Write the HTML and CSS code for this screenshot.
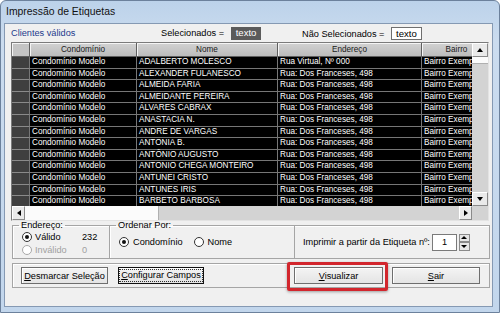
FILE: index.html
```html
<!DOCTYPE html>
<html lang="pt-BR">
<head>
  <meta charset="UTF-8">
  <title>Impressão de Etiquetas</title>
  <link rel="stylesheet" href="styles.css">
</head>
<body>
  <div class="window">
    <div class="titlebar">Impressão de Etiquetas</div>

    <div class="client">
      <!-- Counters -->
      <div class="topbar">
        <span class="caption">Clientes válidos</span>
        <span class="counter counter-sel">Selecionados = <span class="tag tag-dark">texto</span></span>
        <span class="counter">Não Selecionados = <span class="tag tag-light">texto</span></span>
      </div>

      <!-- Grid -->
      <div class="grid">
        <div class="grid-main">
          <div class="grid-view" id="grid-view">
            <div class="hcell hcell-ind"></div>
            <div class="hcell">Condomínio</div>
            <div class="hcell">Nome</div>
            <div class="hcell">Endereço</div>
            <div class="hcell">Bairro</div>
          </div>
          <div class="vscroll">
            <div class="sbtn"><span class="arrow up"></span></div>
            <div class="vthumb"></div>
            <div class="vtrack"></div>
            <div class="sbtn"><span class="arrow down"></span></div>
          </div>
        </div>
        <div class="hscroll-row">
          <div class="hscroll">
            <div class="sbtn sbtn-h"><span class="arrow left"></span></div>
            <div class="hthumb"></div>
            <div class="htrack"></div>
            <div class="sbtn sbtn-h"><span class="arrow right"></span></div>
          </div>
          <div class="corner"></div>
        </div>
      </div>

      <!-- Options -->
      <div class="options">
        <fieldset class="group group-addr">
          <legend>Endereço:</legend>
          <div class="addr-row">
            <span class="radio checked"></span><span>Válido</span><span>232</span>
          </div>
          <div class="addr-row disabled">
            <span class="radio"></span><span>Inválido</span><span>0</span>
          </div>
        </fieldset>
        <fieldset class="group group-order">
          <legend>Ordenar Por:</legend>
          <div class="order-row">
            <span class="radio checked"></span><span>Condomínio</span>
            <span class="radio radio-nome"></span><span>Nome</span>
          </div>
        </fieldset>
        <div class="group-start">
          <span>Imprimir a partir da Etiqueta nº:</span>
          <span class="num-box">1</span>
          <span class="spin">
            <span class="spin-btn"><span class="arrow up small"></span></span>
            <span class="spin-btn"><span class="arrow down small"></span></span>
          </span>
        </div>
      </div>

      <!-- Buttons -->
      <div class="actions">
        <button class="btn"><u>D</u>esmarcar Seleção</button>
        <button class="btn btn-focus"><span class="focus-ring"><u>C</u>onfigurar Campos</span></button>
        <button class="btn btn-view"><u>V</u>isualizar</button>
        <button class="btn btn-exit"><u>S</u>air</button>
        <div class="highlight"></div>
      </div>
    </div>
  </div>

  <script>
    const names = [
      "ADALBERTO MOLESCO", "ALEXANDER FULANESCO", "ALMEIDA FARIA", "ALMEIDANTE PEREIRA",
      "ÁLVARES CABRAX", "ANASTACIA N.", "ANDRE DE VARGAS", "ANTONIA B.",
      "ANTÔNIO AUGUSTO", "ANTONIO CHEGA MONTEIRO", "ANTUNEI CRISTO", "ANTUNES IRIS",
      "BARBETO BARBOSA"
    ];
    const view = document.getElementById("grid-view");
    names.forEach((name, i) => {
      const cells = [
        "",
        "Condomínio Modelo",
        name,
        i === 0 ? "Rua Virtual, Nº 000" : "Rua: Dos Franceses, 498",
        "Bairro Exemplo"
      ];
      cells.forEach((text, c) => {
        const cell = document.createElement("div");
        cell.className = c === 0 ? "cell cell-ind" : "cell";
        cell.textContent = text;
        view.appendChild(cell);
      });
    });
  </script>
</body>
</html>
```

FILE: styles.css
```css
* {
  box-sizing: border-box;
}

body {
  margin: 0;
  width: 500px;
  height: 313px;
  overflow: hidden;
  font-family: "Liberation Sans", Arial, sans-serif;
  font-size: 9.2px;
  color: #000;
  background: #fff;
}

/* Window frame */
.window {
  height: 313px;
  display: flex;
  flex-direction: column;
  padding: 0 6px 5px 3px;
  background: linear-gradient(to bottom, #bcd2ea, #cbdcef 40px, #c2d6ec);
  border: 1px solid #6c819c;
  border-radius: 6px 6px 0 0;
}

.titlebar {
  height: 22px;
  line-height: 22px;
  padding-left: 2px;
  font-size: 10.4px;
  color: #111;
}

.client {
  flex: 1;
  display: flex;
  flex-direction: column;
  background: #f0f0f0;
  border: 1px solid #8599b3;
}

/* Counters */
.topbar {
  height: 18px;
  display: flex;
  align-items: center;
  padding-left: 6px;
}

.caption {
  width: 150px;
  color: #1c3a8c;
}

.counter-sel {
  width: 141px;
}

.tag {
  display: inline-block;
  height: 13px;
  line-height: 12px;
  padding: 0 5px;
  margin-left: 4px;
  font-size: 9.6px;
}

.tag-dark {
  background: #5b5b5b;
  color: #fff;
}

.tag-light {
  background: #fff;
  border: 1px solid #6f6f6f;
  padding: 0 4px;
}

/* Grid */
.grid {
  margin-left: 6px;
  width: 478px;
  height: 179px;
  display: flex;
  flex-direction: column;
  border: 1px solid #7b7b7b;
  border-right-color: #e3e3e3;
  border-bottom-color: #e3e3e3;
}

.grid-main {
  display: flex;
  height: 163px;
}

.grid-view {
  width: 460px;
  overflow: hidden;
  display: grid;
  grid-template-columns: 18px 107px 141px 144px 70px;
  grid-template-rows: 14px;
  grid-auto-rows: 11.6px;
  font-size: 8.2px;
  background: #000;
}

.hcell {
  background: linear-gradient(to bottom, #d2d2d2, #bcbcbc);
  border-right: 1px solid #5e5e5e;
  border-bottom: 1px solid #5e5e5e;
  box-shadow: inset 1px 1px #f4f4f4;
  text-align: center;
  line-height: 13px;
  color: #1a1a1a;
  white-space: nowrap;
}

.hcell-ind {
  background: #c4c4c4;
}

.cell {
  color: #fff;
  background: #000;
  border-right: 1px solid #767676;
  border-bottom: 1px solid #767676;
  padding-left: 2px;
  line-height: 10.6px;
  white-space: nowrap;
}

.cell-ind {
  background: #3f3f3f;
  border-bottom-color: #8a8a8a;
}

/* Scrollbars */
.vscroll {
  width: 16px;
  display: flex;
  flex-direction: column;
  background: #d3d3d3;
}

.sbtn {
  height: 14px;
  display: flex;
  align-items: center;
  justify-content: center;
  background: #eaeaea;
  border: 1px solid;
  border-color: #fff #8a8a8a #8a8a8a #fff;
}

.sbtn-h {
  width: 13px;
  height: 100%;
}

.vthumb {
  height: 7px;
  background: #fbfbfb;
  border-bottom: 1px solid #b0b0b0;
}

.vtrack {
  flex: 1;
}

.arrow {
  width: 0;
  height: 0;
  border: 3px solid transparent;
}

.arrow.up {
  border-bottom: 4px solid #000;
  border-top-width: 0;
}

.arrow.down {
  border-top: 4px solid #000;
  border-bottom-width: 0;
}

.arrow.left {
  border-right: 4px solid #000;
  border-left-width: 0;
}

.arrow.right {
  border-left: 4px solid #000;
  border-right-width: 0;
}

.hscroll-row {
  display: flex;
  flex: 1;
}

.hscroll {
  flex: 1;
  display: flex;
  background: #d3d3d3;
}

.hthumb {
  width: 134px;
  background: #fbfbfb;
  border-right: 1px solid #b0b0b0;
}

.htrack {
  flex: 1;
}

.corner {
  width: 16px;
  background: #d3d3d3;
}

/* Options */
.options {
  display: flex;
  width: 478px;
  margin-left: 7px;
  height: 38px;
}

.group {
  margin: 0;
  padding: 0 0 0 6px;
  border: 1px solid #a5a5a5;
  box-shadow: 1px 1px 0 #fff inset;
  min-width: 0;
}

.group legend {
  padding: 0 2px;
  line-height: 9px;
}

.group-addr {
  width: 98px;
}

.group-order {
  width: 185px;
  border-left: none;
}

.addr-row {
  display: grid;
  grid-template-columns: 13px 47px auto;
  align-items: center;
  height: 13px;
  margin-left: 3px;
}

.addr-row.disabled {
  color: #a0a0a0;
}

.radio {
  display: inline-block;
  width: 10px;
  height: 10px;
  border: 1px solid #333;
  border-radius: 50%;
  background: #fff;
  position: relative;
}

.radio.checked::after {
  content: "";
  position: absolute;
  left: 2px;
  top: 2px;
  width: 4px;
  height: 4px;
  border-radius: 50%;
  background: #111;
}

.disabled .radio {
  border-color: #a8a8a8;
}

.order-row {
  display: flex;
  align-items: center;
  gap: 4px;
  margin: 7px 0 0 3px;
}

.radio-nome {
  margin-left: 7px;
}

.group-start {
  flex: 1;
  display: flex;
  align-items: center;
  margin-top: 4px;
  padding-left: 8px;
  border: 1px solid #a5a5a5;
  border-left: none;
  box-shadow: 0 1px 0 #fff inset;
}

.num-box {
  width: 25px;
  height: 17px;
  margin-left: 2px;
  background: #fff;
  border: 1px solid #7a7a7a;
  text-align: center;
  line-height: 15px;
}

.spin {
  display: flex;
  flex-direction: column;
  width: 11px;
  height: 17px;
  margin-left: 2px;
}

.spin-btn {
  flex: 1;
  display: flex;
  align-items: center;
  justify-content: center;
  background: #e6e6e6;
  border: 1px solid #8a8a8a;
}

.arrow.small {
  border-width: 0 3px 3px;
}

.arrow.small.down {
  border-width: 3px 3px 0;
}

/* Buttons */
.actions {
  position: relative;
  display: flex;
  width: 478px;
  height: 25px;
  margin: 4px 0 0 7px;
  padding: 3px 9px 0 8px;
  border: 1px solid #a5a5a5;
  box-shadow: 1px 1px 0 #fff inset;
}

.btn {
  height: 17px;
  padding: 0;
  font-family: inherit;
  font-size: 9.2px;
  color: #000;
  background: linear-gradient(to bottom, #f4f4f4, #e4e4e4);
  border: 1px solid #6e6e6e;
  box-shadow: inset 1px 1px #fff;
}

.btn:first-child {
  width: 87px;
}

.btn-focus {
  width: 86px;
  margin-left: 10px;
  border-color: #111;
}

.focus-ring {
  display: inline-block;
  outline: 1px dotted #333;
  padding: 0 1px;
  line-height: 11px;
}

.btn-view {
  width: 89px;
  margin-left: auto;
}

.btn-exit {
  width: 88px;
  margin-left: 9px;
}

.highlight {
  position: absolute;
  left: 274px;
  top: -2px;
  width: 101px;
  height: 29px;
  border: 3px solid #d2262d;
  border-radius: 2px;
  box-shadow: 0 1px 3px rgba(0, 0, 0, 0.35);
}
```
